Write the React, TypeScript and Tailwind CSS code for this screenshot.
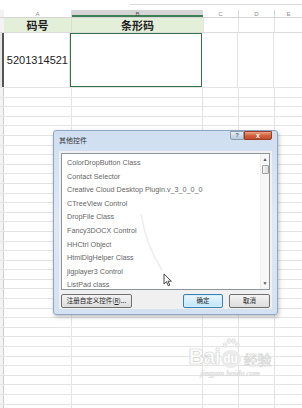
const rowCount = 34;

const items = [
  "ColorDropButton Class",
  "Contact Selector",
  "Creative Cloud Desktop Plugin.v_3_0_0_0",
  "CTreeView Control",
  "DropFile Class",
  "Fancy3DOCX Control",
  "HHCtrl Object",
  "HtmlDlgHelper Class",
  "jigplayer3 Control",
  "ListPad class",
];

function GridRow() {
  return (
    <div className="flex h-[9.6px] border-b border-[#e4e4e4]">
      <div className="w-[4px] border-r border-[#cfcfcf] bg-[#f3f3f3]" />
      <div className="w-[68px] border-r border-[#e4e4e4]" />
      <div className="w-[131px] border-r border-[#e4e4e4]" />
      <div className="w-[36px] border-r border-[#e4e4e4]" />
      <div className="w-[36px] border-r border-[#e4e4e4]" />
      <div className="flex-1" />
    </div>
  );
}

function Sheet() {
  return (
    <div className="flex flex-col">
      <div className="flex h-[10px] bg-white">
        <div className="ml-[130px] mt-[2px] h-[3px] flex-1 border-b border-[#dadada]" />
      </div>
      <div className="flex h-[8px] border-b border-[#d4d4d4] text-[6px] leading-[8px] text-[#8a8a8a] [font-family:'Liberation_Sans',sans-serif]">
        <div className="w-[4px] bg-[#f3f3f3]" />
        <div className="w-[68px] border-r border-[#dadada] text-center">A</div>
        <div className="w-[131px] border-b-2 border-[#3f7f56] bg-[#d5d5d5] text-center text-[#555]">B</div>
        <div className="w-[36px] border-r border-[#dadada] text-center">C</div>
        <div className="w-[36px] border-r border-[#dadada] text-center">D</div>
        <div className="flex-1 text-center">E</div>
      </div>
      <div className="flex h-[15px] border-b border-[#dcdcdc] text-[11px] font-bold leading-[15px] text-[#222] [font-family:'Noto_Sans_CJK_SC',sans-serif]">
        <div className="w-[4px] bg-[#f3f3f3]" />
        <div className="w-[68px] border-r border-[#d6dfd0] bg-[#e3efd9] text-center">码号</div>
        <div className="w-[131px] bg-[#e3efd9] text-center">条形码</div>
        <div className="w-[36px] border-x border-[#e4e4e4]" />
        <div className="w-[36px] border-r border-[#e4e4e4]" />
        <div className="flex-1" />
      </div>
      <div className="flex h-[55px] border-b border-[#e4e4e4]">
        <div className="w-[4px] border-r-2 border-[#555] bg-[#e6e6e6]" />
        <div className="flex w-[66px] items-center justify-end border-r border-[#e4e4e4] pr-[1px] text-[11px] text-[#222] [font-family:'Liberation_Sans',sans-serif]">
          5201314521
        </div>
        <div className="w-[132px] border-[1.5px] border-[#356f4b]" />
        <div className="w-[36px] border-r border-[#e4e4e4]" />
        <div className="w-[36px] border-r border-[#e4e4e4]" />
        <div className="flex-1" />
      </div>
      {Array.from({ length: rowCount }).map((_, i) => (
        <GridRow key={i} />
      ))}
    </div>
  );
}

function Dialog() {
  return (
    <div className="absolute left-[53px] top-[130px] flex h-[185px] w-[225px] flex-col rounded-[3px] border border-[#8fa6c4] bg-gradient-to-b from-[#cfdff1] via-[#dfe9f5] to-[#d3e1f0] px-[5px] pb-[5px] shadow-[1px_2px_4px_rgba(0,0,0,0.25)]">
      <div className="flex h-[20px] items-start justify-between">
        <div className="pt-[4px] text-[7px] leading-[10px] text-[#333] [font-family:'Noto_Sans_CJK_SC',sans-serif]">其他控件</div>
        <div className="flex">
          <div className="flex h-[9px] w-[14px] items-center justify-center rounded-bl-[2px] border border-[#8b9bb0] bg-gradient-to-b from-[#e8eef6] to-[#b9c8da] text-[6px] font-bold text-[#5a6b80] [font-family:'Liberation_Sans',sans-serif]">?</div>
          <div className="flex h-[9px] w-[28px] items-center justify-center rounded-br-[2px] border border-[#9a3d24] bg-gradient-to-b from-[#e8a58a] via-[#d4623e] to-[#c24b2a] text-[7px] font-bold leading-none text-white [font-family:'Liberation_Sans',sans-serif]">x</div>
        </div>
      </div>
      <div className="flex flex-1 flex-col bg-[#f0f0f0] px-[2px] pt-[2px]">
        <div className="flex h-[137px] border border-[#8e949c] bg-white">
          <div className="flex flex-1 flex-col pl-[5px] pt-[2px] text-[7.2px] leading-[13.6px] text-[#666] [font-family:'Liberation_Sans',sans-serif]">
            {items.map((t) => (
              <div key={t} className="whitespace-nowrap">{t}</div>
            ))}
          </div>
          <div className="flex w-[9px] flex-col items-center border-l border-[#eeeeee] bg-[#f7f7f7] py-[3px]">
            <div className="text-[5px] leading-[5px] text-[#555]">▲</div>
            <div className="mt-[3px] h-[9px] w-[7px] rounded-[1px] border border-[#a0a0a0] bg-gradient-to-r from-[#f4f4f4] to-[#dcdcdc]" />
            <div className="flex-1" />
            <div className="text-[5px] leading-[5px] text-[#555]">▼</div>
          </div>
        </div>
        <div className="mt-[4px] flex items-center text-[6.5px] text-[#222] [font-family:'Noto_Sans_CJK_SC',sans-serif]">
          <div className="flex h-[14px] w-[71px] items-center justify-center rounded-[2px] border border-[#707070] bg-gradient-to-b from-[#f4f4f4] to-[#dddddd]">
            注册自定义控件(<span className="underline">R</span>)...
          </div>
          <div className="flex-1" />
          <div className="flex h-[14px] w-[40px] items-center justify-center rounded-[2px] border border-[#3c7fb1] bg-gradient-to-b from-[#eaf6fd] to-[#bee6fd] shadow-[inset_0_0_0_1px_#d6eefc]">
            确定
          </div>
          <div className="ml-[6px] flex h-[14px] w-[41px] items-center justify-center rounded-[2px] border border-[#707070] bg-gradient-to-b from-[#f4f4f4] to-[#dddddd]">
            取消
          </div>
        </div>
      </div>
    </div>
  );
}

function Cursor() {
  return (
    <svg className="absolute left-[140px] top-[212px]" width="36" height="76" viewBox="0 0 36 76">
      {/* faint mouse trail */}
      <path d="M1 2 C4 20 10 40 22 58" fill="none" stroke="#ececec" strokeWidth="1.5" />
      <path d="M24 62 L24 72 L26.5 69.7 L28.3 73.8 L29.8 73.1 L28 69.2 L31.4 69.2 Z" fill="#fff" stroke="#333" strokeWidth="0.9" strokeLinejoin="round" />
    </svg>
  );
}

function Watermark() {
  return (
    <div className="absolute left-[184px] top-[346px] flex w-[92px] flex-col items-center text-[#e0e0e0] [text-shadow:0_0_1px_#c8c8c8]">
      <div className="flex items-end gap-[1px] [font-family:'Liberation_Sans',sans-serif]">
        <span className="text-[22px] font-bold leading-[22px] tracking-[-1px] text-white [-webkit-text-stroke:0.6px_#d6d6d6]">Bai</span>
        <span className="relative flex h-[18px] w-[20px] items-center justify-center rounded-full bg-[#ececec] text-[12px] font-bold text-white">
          du
          <svg className="absolute -top-[12px] left-[1px]" width="18" height="12" viewBox="0 0 18 12">
            <g fill="#ededed" stroke="#d8d8d8" strokeWidth="0.5">
              <ellipse cx="3" cy="7" rx="2" ry="2.6" />
              <ellipse cx="7" cy="3" rx="2" ry="2.6" />
              <ellipse cx="11.5" cy="3" rx="2" ry="2.6" />
              <ellipse cx="15.3" cy="7" rx="2" ry="2.6" />
            </g>
          </svg>
        </span>
        <span className="ml-[2px] text-[14px] leading-[18px] text-white [-webkit-text-stroke:0.6px_#d6d6d6] [font-family:'Noto_Sans_CJK_SC',sans-serif]">经验</span>
      </div>
      <div className="mt-[1px] text-[8px] italic leading-[10px] [font-family:'Liberation_Serif',serif]">jingyan.baidu.com</div>
    </div>
  );
}

export default function App() {
  return (
    <div className="relative h-[408px] w-[302px] overflow-hidden bg-white">
      <Sheet />
      <Dialog />
      <Cursor />
      <Watermark />
    </div>
  );
}
